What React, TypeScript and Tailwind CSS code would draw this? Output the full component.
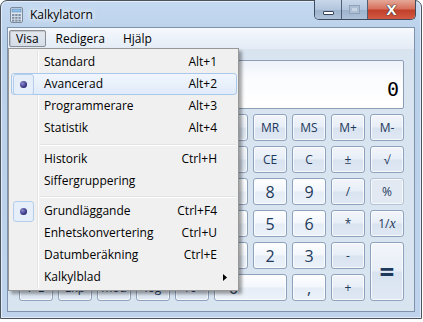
import React from 'react';

const UI = "font-['Open_Sans','Noto_Sans',sans-serif]";

type Key = { label: React.ReactNode; kind?: 'num' | 'op' | 'off' | 'blank'; span?: string };

// left-hand scientific keys sit under the open menu, so only the bottom row shows its labels
const keys: Key[] = [
  { label: '', kind: 'blank' }, { label: '' }, { label: '' }, { label: '' }, { label: '' },
  { label: '' }, { label: 'CE' }, { label: 'C' }, { label: '±' }, { label: '√' },
  { label: '' }, { label: '' }, { label: '' }, { label: '' }, { label: '' },
  { label: '', kind: 'num' }, { label: '8', kind: 'num' }, { label: '9', kind: 'num' }, { label: '/' }, { label: '%', kind: 'off' },
  { label: '' }, { label: '' }, { label: '' }, { label: '' }, { label: '' },
  { label: '', kind: 'num' }, { label: '5', kind: 'num' }, { label: '6', kind: 'num' }, { label: '*' },
  { label: <span>1/<i className="font-['Liberation_Serif',serif] text-[14px]">x</i></span> },
  { label: '' }, { label: '' }, { label: '' }, { label: '' }, { label: '' },
  { label: '', kind: 'num' }, { label: '2', kind: 'num' }, { label: '3', kind: 'num' }, { label: '-' },
  { label: '=', span: 'row-span-2' },
  { label: 'F-E' }, { label: 'Exp' }, { label: 'mod' }, { label: 'log' }, { label: <span>10<sup className="text-[8px]">x</sup></span> },
  { label: '0', kind: 'num', span: 'col-span-2 justify-start pl-[14px]' }, { label: ',', kind: 'num' }, { label: '+' },
];

function CalcKey({ k }: { k: Key }) {
  if (k.kind === 'blank') return <div />;
  const base =
    'flex items-center justify-center rounded-[3px] border text-[#1e395b] shadow-[inset_0_0_0_1px_rgba(255,255,255,0.7)]';
  let look = 'border-[#8fa2bb] bg-[linear-gradient(#f2f6fb_0%,#e8eef7_48%,#d9e3f0_52%,#e0e8f3_100%)] text-[12px]';
  if (k.kind === 'num')
    look = 'border-[#8fa2bb] bg-[linear-gradient(#fdfeff_0%,#f3f7fc_48%,#e6edf6_52%,#edf2f9_100%)] text-[16px]';
  if (k.kind === 'off') look = 'border-[#b4c2d4] bg-[#e2e9f3] text-[12px]';
  if (k.label === '=') look += ' text-[26px] font-bold leading-none';
  return <div className={`${base} ${look} ${k.span ?? ''}`}>{k.label}</div>;
}

function CalcIcon() {
  return (
    <svg width="13" height="16" viewBox="0 0 13 16">
      <rect x="0.5" y="0.5" width="12" height="15" rx="1.5" fill="#dfe6ee" stroke="#7c8a9b" />
      <rect x="2" y="2" width="9" height="3" fill="#8fc0ea" stroke="#5b86b3" strokeWidth="0.6" />
      {[0, 1, 2].map((c) =>
        [0, 1, 2].map((r) => (
          <rect key={`${c}-${r}`} x={2 + c * 3.2} y={7 + r * 2.8} width="2.4" height="2" fill="#7d8fa6" />
        )),
      )}
    </svg>
  );
}

function Bullet() {
  return (
    <div className="flex h-[21px] w-[21px] items-center justify-center rounded-[3px] border border-[#b4cdea] bg-[#e6eef9]">
      <div className="h-[7px] w-[7px] rounded-full bg-[radial-gradient(circle_at_35%_35%,#8c8ad0,#2e2b7a_70%)]" />
    </div>
  );
}

type Item = { label: string; short?: string; bullet?: boolean; hot?: boolean; sub?: boolean } | 'sep9' | 'sep8';

const menu: Item[] = [
  { label: 'Standard', short: 'Alt+1' },
  { label: 'Avancerad', short: 'Alt+2', bullet: true, hot: true },
  { label: 'Programmerare', short: 'Alt+3' },
  { label: 'Statistik', short: 'Alt+4' },
  'sep9',
  { label: 'Historik', short: 'Ctrl+H' },
  { label: 'Siffergruppering' },
  'sep8',
  { label: 'Grundläggande', short: 'Ctrl+F4', bullet: true },
  { label: 'Enhetskonvertering', short: 'Ctrl+U' },
  { label: 'Datumberäkning', short: 'Ctrl+E' },
  { label: 'Kalkylblad', sub: true },
];

function VisaMenu() {
  return (
    <div
      className={`absolute left-[8px] top-[48px] w-[231px] border border-[#979797] bg-[#f0f0f0] py-[2px] pl-[2px] pr-[1px] text-[12px] text-black shadow-[3px_3px_3px_rgba(0,0,0,0.35)] ${UI}`}
    >
      <div className="pointer-events-none absolute bottom-[2px] left-[28px] top-[2px] w-[1px] bg-[#e2e3e3]" />
      <div className="pointer-events-none absolute bottom-[2px] left-[29px] top-[2px] w-[1px] bg-white" />
      {menu.map((it, i) => {
        if (it === 'sep9' || it === 'sep8')
          return (
            <div key={i} className={`${it === 'sep9' ? 'h-[9px] pt-[5px]' : 'h-[8px] pt-[4px]'} pl-[29px] pr-[1px]`}>
              <div className="h-[1px] bg-[#e2e3e3]" />
              <div className="h-[1px] bg-white" />
            </div>
          );
        return (
          <div
            key={i}
            className={`relative flex h-[22px] items-center rounded-[3px] pl-[1px] pr-[19px] ${
              it.hot ? 'border border-[#a8c8ec] bg-[linear-gradient(#f1f6fd,#e0ebf9)]' : 'border border-transparent'
            }`}
          >
            <div className="w-[31px]">{it.bullet && <Bullet />}</div>
            <span className="flex-1">{it.label}</span>
            {it.short && <span>{it.short}</span>}
            {it.sub && (
              <svg width="4" height="7" viewBox="0 0 4 7" className="-mr-[10px]">
                <path d="M0 0 L4 3.5 L0 7 Z" fill="#000" />
              </svg>
            )}
          </div>
        );
      })}
    </div>
  );
}

export default function App() {
  return (
    <div className={`relative h-[322px] w-[423px] overflow-hidden bg-white ${UI}`}>
      <div className="flex h-[319px] w-[422px] flex-col rounded-t-[7px] border border-[#4b535e] bg-[linear-gradient(#c5daf1_0%,#b9d0ea_12%,#bfd4ec_100%)] px-[6px] pb-[6px] shadow-[inset_0_0_0_1px_rgba(255,255,255,0.55)]">
        {/* title bar */}
        <div className="flex h-[26px] items-start">
          <div className="mt-[6px] ml-[3px]">
            <CalcIcon />
          </div>
          <span className="ml-[7px] mt-[5px] text-[12px] text-black [text-shadow:0_0_8px_#fff,0_0_4px_#fff]">
            Kalkylatorn
          </span>
          <div className="-mt-[1px] ml-auto -mr-[1px] flex h-[20px] overflow-hidden rounded-b-[5px] border border-t-0 border-[#3f4c5f]">
            <div className="flex w-[27px] items-center justify-center border-r border-[#4f5e73] bg-[linear-gradient(#c9d8ea_0%,#b2c5dc_50%,#9db2cc_52%,#aec2d9_100%)]">
              <div className="mt-[6px] h-[4px] w-[11px] rounded-[1px] border border-[#38445a] bg-white" />
            </div>
            <div className="flex w-[26px] items-center justify-center border-r border-[#4f5e73] bg-[linear-gradient(#c9d8ea_0%,#b2c5dc_50%,#9db2cc_52%,#aec2d9_100%)]">
              <div className="h-[9px] w-[11px] border border-[#8ea3bb] bg-[#c6d4e4] shadow-[inset_0_0_0_2px_#aebfd3]" />
            </div>
            <div className="flex w-[47px] items-center justify-center bg-[linear-gradient(#e5a898_0%,#d7725e_45%,#c2402a_55%,#d25a44_100%)]">
              <span className="text-[15px] font-bold leading-none text-white [text-shadow:0_0_1px_#333,0_0_1px_#333,0_0_1px_#333]">
                X
              </span>
            </div>
          </div>
        </div>

        {/* client */}
        <div className="flex flex-1 flex-col border border-[#7f93ad] bg-[#d9e4f1]">
          <div className="flex h-[22px] items-center gap-[2px] border-b border-[#dbe3ee] bg-[linear-gradient(#f6f9fd,#e3ebf5)] pl-[1px] text-[12px] text-black">
            <div className="flex h-[17px] items-center rounded-[2px] border border-[#8a8f96] bg-[linear-gradient(#e4e9ef,#d5dde7)] px-[6px] shadow-[inset_1px_1px_1px_rgba(0,0,0,0.15)]">
              Visa
            </div>
            <div className="px-[8px]">Redigera</div>
            <div className="px-[8px]">Hjälp</div>
          </div>

          <div className="flex flex-1 flex-col pl-[11px] pr-[10px] pt-[10px]">
            <div className="flex h-[49px] flex-col items-end justify-end rounded-[2px] border border-[#8c9db5] bg-[linear-gradient(#eef3fa,#fbfcfe_40%,#ffffff)] pb-[9px] pr-[4px]">
              <span className="font-['DejaVu_Sans_Mono',monospace] text-[20px] leading-none text-black">0</span>
            </div>
            <div className="mt-[5px] grid grid-cols-[repeat(10,34px)] grid-rows-[repeat(6,27px)] gap-[5px]">
              <div className="col-span-5 rounded-[3px] border border-[#a9b8cc]" />
              {['', 'MR', 'MS', 'M+', 'M-'].map((m, i) => (
                <CalcKey key={i} k={{ label: m }} />
              ))}
              {keys.map((k, i) => (
                <CalcKey key={i} k={k} />
              ))}
            </div>
          </div>
        </div>
      </div>
      <VisaMenu />
    </div>
  );
}
